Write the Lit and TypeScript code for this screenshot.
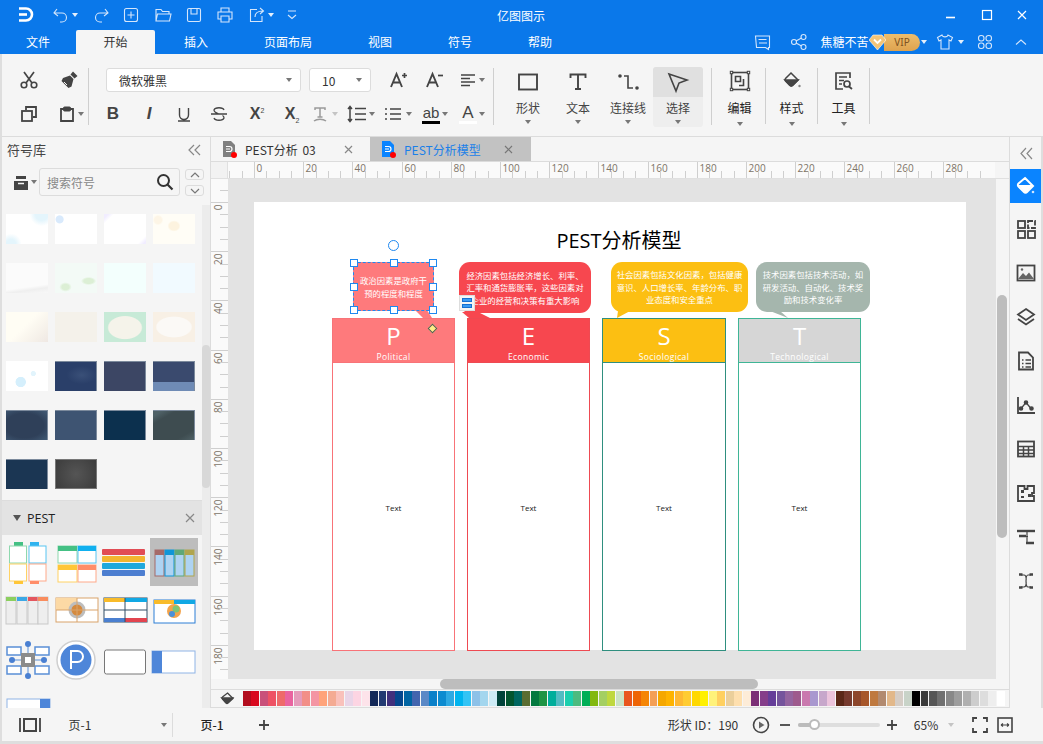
import { LitElement, html, css, svg, TemplateResult } from "lit";
import { customElement } from "lit/decorators.js";

const ic = (body: unknown, w = 20, h = 20, cls = "") =>
  html`<svg class="ic ${cls}" width=${w} height=${h} viewBox="0 0 ${w} ${h}">${body}</svg>`;
const caret = html`<i class="caret"></i>`;
type Item = [number, number, TemplateResult | string];
const row = (items: Item[], offset = 0) => {
  let end = offset;
  return items.map(([c, w, t]) => {
    const ml = c - w / 2 - end;
    end = c + w / 2;
    return html`<span class="cell" style="margin-left:${ml}px;width:${w}px">${t}</span>`;
  });
};

const logo = ic(svg`<path d="M3 3.500h7a6 6 0 0 1 0 12H3" fill="none" stroke-width="2.600"/><path d="M3 9.500h8" stroke-width="2.600"/>`, 20, 20);

const titleItems: Item[] = [
  [26, 20, logo],
  [61, 18, ic(svg`<path d="M5 3L2 7l4 3M2 7h8a4.500 4.500 0 0 1 0 9H8"/>`, 18, 18, "soft")],
  [75, 8, caret],
  [101, 18, ic(svg`<path d="M13 3l3 4-4 3M16 7H8a4.500 4.500 0 0 0 0 9h2"/>`, 18, 18, "soft")],
  [131, 16, ic(svg`<rect x="1.500" y="1.500" width="13" height="13" rx="2"/><path d="M8 4.500v7M4.500 8h7"/>`, 16, 16, "soft")],
  [163, 18, ic(svg`<path d="M2 15V3.500h5l1.500 2H15V8M2 15l1.500-7H17L15.500 15z"/>`, 18, 18, "soft")],
  [194, 16, ic(svg`<rect x="1.500" y="1.500" width="13" height="13" rx="1.500"/><path d="M5 2v5h6V2"/>`, 16, 16, "soft")],
  [225, 18, ic(svg`<path d="M5 6V2h8v4M5 13H2V6h14v7h-3M5 10h8v6H5z"/>`, 18, 18, "soft")],
  [257, 18, ic(svg`<path d="M14 10v5.500H2.500V3.500H9M7 11c0-4 3-6 8-6M12 2l3.500 3L12 8"/>`, 18, 18, "soft")],
  [271, 8, caret],
  [292, 14, ic(svg`<path d="M3 3h8M3 7l4 3.500L11 7"/>`, 14, 14, "soft")],
  [521, 60, html`<span class="apptitle">亿图图示</span>`],
  [951, 12, ic(svg`<path d="M1 8.500h9" stroke-width="1.600"/>`, 12, 12)],
  [987, 12, ic(svg`<rect x="1.500" y="1.500" width="9" height="9"/>`, 12, 12)],
  [1022, 12, ic(svg`<path d="M2 2l8 8M10 2l-8 8"/>`, 12, 12)],
];

const tabItems: Item[] = [
  [38, 40, "文件"],
  [115.5, 79, html`<span class="tab-on">开始</span>`],
  [196, 40, "插入"],
  [288, 70, "页面布局"],
  [380, 40, "视图"],
  [460, 40, "符号"],
  [540, 40, "帮助"],
  [763, 18, ic(svg`<path d="M1.500 3H15.500V14.500H14.500V16.500L11.500 14.500H2.500zM4.500 6.500h8M5 10h8"/>`, 18, 18, "soft")],
  [799, 18, ic(svg`<circle cx="4" cy="9" r="2.500"/><circle cx="13.500" cy="4" r="2.500"/><circle cx="13.500" cy="14" r="2.500"/><path d="M6 8l5.500-3M6 10l5.500 3"/>`, 18, 18, "soft")],
  [844.5, 48, html`<span class="uname">焦糖不苦</span>`],
  [894, 52, html`<span class="vip"><i class="vip-pill">VIP</i><svg class="vip-gem" width="17" height="17" viewBox="0 0 17 17"><path d="M4 1h9l4 5-8.500 10L0 6z" fill="#f3c477" stroke="#fff" stroke-width=".6"/><path d="M5 5.500l3.500 3.500L12 5.500" fill="none" stroke="#fff" stroke-width="1.800"/></svg></span>`],
  [924, 8, caret],
  [945, 18, ic(svg`<path d="M6 2L1.500 4.500l1.500 3.500 2-1V16h8V7l2 1 1.500-3.500L12 2c-.500 2.500-5.500 2.500-6 0z"/>`, 18, 18, "soft")],
  [961, 8, caret],
  [985, 16, ic(svg`<rect x="1.500" y="1.500" width="5.500" height="5.500" rx="2.500"/><rect x="9" y="1.500" width="5.500" height="5.500" rx="2.500"/><rect x="1.500" y="9" width="5.500" height="5.500" rx="2.500"/><rect x="9" y="9" width="5.500" height="5.500" rx="2.500"/>`, 16, 16, "soft")],
  [1021, 14, ic(svg`<path d="M2 9.500l5-4.500 5 4.500"/>`, 14, 14, "soft")],
];

const d = (b: unknown, s = 20) => ic(b, s, s, "dark");
const fontTop: Item[] = [
  [398, 20, d(svg`<path d="M3 17L8.500 4 14 17M5 12.500h7" stroke-width="1.900"/><path d="M14 5.500h5M16.500 3v5" stroke-width="1.700"/>`)],
  [434, 20, d(svg`<path d="M3 17L8.500 4 14 17M5 12.500h7" stroke-width="1.900"/><path d="M14 5.500h5" stroke-width="1.700"/>`)],
  [468, 16, d(svg`<path d="M1 3h14M1 6.500h9M1 10h14M1 13.500h9" stroke-width="1.500"/>`, 16)],
  [482, 8, caret],
];
const fontBottom: Item[] = [
  [113, 16, html`<b class="fmt fb">B</b>`],
  [149, 16, html`<b class="fmt fi">I</b>`],
  [184, 16, d(svg`<path d="M3.500 2v7a4.500 4.500 0 0 0 9 0V2M2 15h12" stroke-width="1.400"/>`, 16)],
  [219, 18, d(svg`<path d="M14 5c-1-3-9-3-10 0 0 2 2 3 5 4M4 13c1 3 9 3 10 0 0-1-.500-2-1.500-2.500M1 9h16" stroke-width="1.300"/>`, 18)],
  [257, 24, html`<span class="sup">X<sup>2</sup></span>`],
  [292, 24, html`<span class="sup">X<sub>2</sub></span>`],
  [320, 16, ic(svg`<path d="M3 4V2h10v2M8 2v9M5.500 11h5M2 15c3-2.500 9-2.500 12 0" stroke="#9a9a9a" stroke-width="1.500"/>`, 16, 16, "dim")],
  [335, 8, html`<i class="caret pale"></i>`],
  [357, 20, d(svg`<path d="M3 3v14M1 5l2-2.500L5 5M1 15l2 2.500L5 15M8 4.500h11M8 10h11M8 15.500h11" stroke-width="1.500"/>`)],
  [372, 8, caret],
  [393, 18, d(svg`<path d="M1 4h2M6 4h11M1 9h2M6 9h11M1 14h2M6 14h11" stroke-width="1.500"/>`, 18)],
  [409, 8, caret],
  [431, 20, html`<span class="ab">ab</span>`],
  [445, 8, caret],
  [468, 20, html`<span class="abig">A</span>`],
  [482, 8, caret],
];

const tools = [
  [ic(svg`<rect x="2" y="2.500" width="18" height="15" stroke-width="1.900"/>`, 22, 20, "tic"), "形状", false],
  [ic(svg`<path d="M2.500 6V2.500h15V6M10 2.500V17M7 17h6" stroke-width="1.900"/>`, 20, 20, "tic"), "文本", false],
  [ic(svg`<circle cx="2" cy="4" r="1.800" fill="#444" stroke="none"/><circle cx="19" cy="16" r="1.800" fill="#444" stroke="none"/><path d="M6 4h4v12h5"/>`, 20, 20, "tic"), "连接线", false],
  [ic(svg`<path d="M2 2l18 6-8 3-3 8z"/>`, 22, 20, "tic"), "选择", true],
] as [TemplateResult, string, boolean][];

const tools2 = [
  [ic(svg`<rect x="2.500" y="2.500" width="17" height="17"/><path d="M6.500 6.500h5v5h-5zM14.500 9v6.500H10"/>${[[2.5, 2.5], [19.5, 2.5], [2.5, 19.5], [19.5, 19.5]].map(([x, y]) => svg`<rect x=${x - 1.2} y=${y - 1.2} width="2.400" height="2.400" fill="#f5f5f5" stroke-width="1"/>`)}`, 22, 22, "tic"), "编辑"],
  [ic(svg`<path d="M10 2l7 7-5.500 5.500a2 2 0 0 1-2.500 0L4.500 10a2 2 0 0 1 0-2.500z" stroke-width="1.500"/><path d="M4 9h13l-5.500 5.500a2 2 0 0 1-2.500 0z" fill="#444"/><circle cx="18.500" cy="15" r="1.200" fill="#888" stroke="none"/>`, 22, 20, "tic"), "样式"],
  [ic(svg`<path d="M17 8V3H3v16h7M6 7h8M6 10.500h5M6 14h3" stroke-width="1.700"/><circle cx="14" cy="14" r="3" stroke-width="1.700"/><path d="M16 16.500l3 2.500" stroke-width="1.800"/>`, 22, 22, "tic"), "工具"],
] as [TemplateResult, string][];

const thumbs: [string, string][] = [
  ["radial-gradient(circle at 85% 0,#e4f5fc 0 14%,transparent 26%),radial-gradient(circle at 12% 100%,#e4f5fc 0 10%,transparent 22%),#fff", ""],
  ["radial-gradient(circle at 11% 18%,#d9eafc 0 8%,transparent 10%),#fff", ""],
  ["linear-gradient(135deg,#f1edff 0 6%,#fff 14%,#fff 88%,#f1edff 96%)", ""],
  ["radial-gradient(ellipse at 50% 40%,#fdf3df 0 16%,transparent 22%),radial-gradient(circle at 12% 20%,#fdf5e6 0 8%,transparent 12%),#fffdf6", ""],
  ["linear-gradient(172deg,#fbfbfb 0 75%,#efefef 85%,#f8f8f8)", ""],
  ["radial-gradient(ellipse at 25% 80%,#dcefd5 0 8%,transparent 14%),radial-gradient(ellipse at 80% 60%,#dcefd5 0 10%,transparent 16%),#f3faf6", ""],
  ["#f3fffd", ""],
  ["#f1faff", ""],
  ["linear-gradient(135deg,#fffdf4 0 45%,#efe8e3)", ""],
  ["#f4f1ea", ""],
  ["radial-gradient(ellipse 42% 40% at 50% 52%,#f5f3ea 0 92%,transparent 100%),#c7ead7", ""],
  ["radial-gradient(ellipse 44% 36% at 50% 50%,#fbf9f6 0 92%,transparent 100%),#f8f0e5", ""],
  ["radial-gradient(circle at 35% 70%,#d5effc 0 14%,transparent 16%),radial-gradient(circle at 65% 42%,#e2f4fc 0 7%,transparent 9%),#fff", ""],
  ["radial-gradient(ellipse at 65% 45%,#3a5078,transparent 40%),#2a3f69", "dk"],
  ["#3c4664", "dk"],
  ["linear-gradient(#3a4a6e 0 68%,#6f8bb5 68% 100%)", "dk"],
  ["radial-gradient(ellipse at 45% 50%,#2f4059 0 60%,#415a75 100%)", "dk"],
  ["#3e5472", "dk"],
  ["#0c304e", "dk"],
  ["linear-gradient(150deg,#4f6166 0 10%,#3e4c50 25%,#3e4c50 80%,#4f6166)", "dk"],
  ["#1b3653", "dk"],
  ["radial-gradient(circle at 50% 50%,#555,#3c3c3c)", "gr"],
];

const R = (x: number, y: number, w: number, h: number, f: string, s = "none", sw = 1, rx = 0) =>
  svg`<rect x=${x} y=${y} width=${w} height=${h} fill=${f} stroke=${s} stroke-width=${sw} rx=${rx}/>`;

const pestThumbs: unknown[] = [
  svg`${R(11, 4, 9, 4, "#44c084")}${R(27, 4, 9, 4, "#2fb3ef")}${R(6.5, 8, 17, 17, "#fff", "#8ed8ae")}${R(26, 8, 17, 17, "#fff", "#58c5f2")}${R(6.5, 26, 17, 17, "#fff", "#ffd264")}${R(26, 26, 17, 17, "#fff", "#ffa98a")}${R(11, 43, 9, 3, "#ffc637")}${R(27, 43, 9, 3, "#ff8d69")}`,
  svg`${R(6, 8, 19, 17, "#fff", "#8ed8ae")}${R(6, 8, 19, 5, "#44c084")}${R(26, 8, 18, 17, "#fff", "#58c5f2")}${R(26, 8, 18, 5, "#11b0ef")}${R(6, 27, 19, 17, "#fff", "#ffd264")}${R(6, 27, 19, 5, "#ffc637")}${R(26, 27, 18, 17, "#fff", "#ffa98a")}${R(26, 27, 18, 5, "#ff8d69")}`,
  svg`${R(1, 11, 43, 6, "#e14c55", "none", 1, 1)}${R(1, 18, 43, 6, "#f3b530", "none", 1, 1)}${R(1, 25, 43, 6, "#1fa8dc", "none", 1, 1)}${R(1, 32, 43, 6, "#4d7ed0", "none", 1, 1)}`,
  svg`${R(5, 12, 9, 26, "#aed3f2", "#a56a68")}${R(5, 12, 9, 5, "#a56a68")}${R(15, 12, 9, 26, "#aed3f2", "#0f96d8")}${R(15, 12, 9, 5, "#0f96d8")}${R(25, 12, 9, 26, "#aed3f2", "#5fa878")}${R(25, 12, 9, 5, "#5fa878")}${R(35, 12, 9, 26, "#aed3f2", "#b0a54e")}${R(35, 12, 9, 5, "#b0a54e")}`,
  svg`${[["#8ccf5f", 3], ["#3ba8e6", 14], ["#e4575f", 25], ["#f98d5e", 35]].map(([c, x]) => svg`${R(x as number, 10, 10, 27, "#eee", "#c9c9c9")}${R(x as number, 10, 10, 4, c as string)}`)}`,
  svg`${R(4, 11, 42, 24, "#fff", "#d9a36a")}${R(4, 11, 21, 12, "#fcd9a5")}<circle cx="25" cy="23" r="8.500" fill="#bdbdbd"/><circle cx="25" cy="23" r="5.500" fill="#d58a3e"/><path d="M4 23h42M25 11v24" stroke="#d9a36a" fill="none"/>`,
  svg`${R(3, 11, 43, 24, "#fff", "#334f66")}${R(3, 11, 21, 4, "#f8bb2a")}${R(24, 11, 22, 4, "#11a8e4")}${R(3, 31, 21, 4, "#4a7fd0")}${R(24, 31, 22, 4, "#e2444f")}<path d="M3 23h43M24 11v24" stroke="#334f66" fill="none"/>`,
  svg`${R(4, 13, 41, 23, "#fff", "#2d7fd6")}${R(4, 13, 20, 4, "#f8bb2a")}${R(24, 13, 21, 4, "#11a8e4")}<circle cx="24" cy="24" r="7" fill="#f3a34a"/><circle cx="26" cy="22" r="3.500" fill="#7cc576"/><circle cx="22" cy="27" r="3" fill="#4a90d9"/>`,
  svg`${R(4, 11, 14, 8, "#fff", "#5a8fd6", 1.5)}${R(32, 11, 14, 8, "#fff", "#5a8fd6", 1.5)}${R(4, 30, 14, 8, "#fff", "#5a8fd6", 1.5)}${R(32, 30, 14, 8, "#fff", "#5a8fd6", 1.5)}<path d="M25 8v32M9 24h32" stroke="#5a8fd6" fill="none"/>${R(18, 17, 14, 14, "#8b8b8b")}${R(22, 21, 6, 6, "#fff")}${[[25, 8], [9, 24], [41, 24], [25, 40]].map(([x, y]) => svg`<circle cx=${x} cy=${y} r="3" fill="#4a80d2"/>`)}`,
  svg`<circle cx="24" cy="24" r="19" fill="#fff" stroke="#cfcfcf" stroke-width="1.500"/><circle cx="24" cy="24" r="15.500" fill="#4e86d9"/><path d="M19 33V15h6.500a5.500 5.500 0 0 1 0 11H19" fill="none" stroke="#fff" stroke-width="2"/>`,
  svg`${R(3.5, 14, 41, 24, "#fff", "#777", 1, 2)}`,
  svg`${R(2, 15, 43, 22, "#fff", "#8fb4e6")}${R(2, 15, 10, 22, "#4e86d9")}`,
  svg`${R(4, 14, 43, 16, "#fff", "#8fb4e6")}${R(37, 14, 10, 16, "#4e86d9")}`,
];

const sideIcons = [
  svg`<rect x="2" y="2" width="7" height="7" stroke-width="1.800"/><rect x="12" y="2" width="7" height="7" stroke-width="1.800" stroke-dasharray="5 1.500"/><rect x="2" y="12" width="7" height="7" stroke-width="1.800"/><rect x="12" y="12" width="7" height="7" stroke-width="1.800"/>`,
  svg`<rect x="1.500" y="2.500" width="17" height="15" stroke-width="1.800"/><path d="M2 16l5-6 3 3 3-3.500 5 6.500z" fill="#666" stroke="none"/><circle cx="6" cy="6.500" r="1.200" fill="#666" stroke="none"/>`,
  svg`<path d="M10 2l8 5.500-8 5.500-8-5.500z" stroke-width="1.800"/><path d="M2 12l8 5.500 8-5.500" stroke-width="1.800"/>`,
  svg`<path d="M3 1.500h9l5 5v12H3z" stroke-width="1.800"/><path d="M6 9h1.500M9.500 9H15M6 12.500h1.500M9.500 12.500H15M6 16h1.500M9.500 16H15" stroke-width="1.300"/>`,
  svg`<path d="M2 2v16h17" stroke-width="1.800"/><path d="M5 13.500l5-6 5 6" stroke-width="1.300"/><circle cx="5" cy="13.500" r="1.500" fill="#444"/><circle cx="10" cy="7.500" r="1.500" fill="#444"/><circle cx="15.500" cy="13.500" r="1.500" fill="#444"/>`,
  svg`<rect x="2" y="2.500" width="16" height="15" stroke-width="1.800"/><path d="M2 7.500h16M2 11h16M2 14.500h16M7.500 7.500v10M12.500 7.500v10" stroke-width="1.500"/>`,
  svg`<path d="M2 3h6.500v3h3V3H18v7h-2v3h2v5H2z" stroke-width="1.800"/><path d="M5 7h3v3H5zM12 11h3v3h-3zM5 13h3v2H5z" fill="#444" stroke="none"/>`,
  svg`<path d="M1 4h18" stroke-width="2.400"/><path d="M11 4v13M4 9.500h8" stroke-width="1.200"/><path d="M3 9h7M10 16h8" stroke-width="2.400"/>`,
  svg`<path d="M5 4h3c3 0 2 6 2 6s1 6-2 6H5M15 4h-3c-2 0-2 6-2 6s0 6 2 6h3" stroke-width="1.200"/><path d="M3 3.500h3.500M3 16.500h3.500M13.500 3.500H17M13.500 16.500H17" stroke-width="2.600"/>`,
];

const palette = `#b20d1e #d9091f #c9507a #ee5264 #ee6a6a #e963a0 #e59bbb #f28f88 #f495a3 #ffa37a #f4ab93 #f9c1bb #e9d5e8 #fdd5e3 #fde3ea #132858 #233a72 #41307c #05478d #0065a3 #4365ae #5a88c6 #0a80c9 #0c8bd0 #2ea9e2 #00b4ef #33c4f5 #8dc1e8 #a3d6ee #cdebf5 #00433a #03552f #006660 #5a6d32 #04793f #1e9444 #00ae9b #52bcc2 #1bcfae #4cbb7f #00ae56 #82b80f #a4cf62 #bfd83f #cbe3c4 #e9561d #ee6506 #f58505 #f49f55 #f5a700 #feb300 #feb833 #ffcc33 #ffd800 #fff000 #fff27a #ffd060 #ebcf9b #fedfae #fdecd8 #7b2f76 #853d8a #653d99 #75549c #94649f #9e5a8d #ca79ae #a998cf #c7a7cb #ecc4dc #5b2818 #763a2e #8d462b #a7562a #bf793f #b28a6f #e2b88a #d5cdc6 #c8d3c8 #000000 #3a3a3a #565656 #707070 #888888 #9d9d9d #b0b0b0 #cdcdcd #dddddd #eeeeee #ffffff`.split(" ");

const STEP = 49.2;
const hRuler = () => {
  const out: unknown[] = [];
  for (let i = -2; i < 60; i++) {
    const x = Math.round(26 + (i * STEP) / 4) + 0.5;
    const major = i % 4 === 0;
    out.push(svg`<path d="M${x} ${major ? 0 : 9}V17" stroke="#cfcfcf"/>`);
    if (major && i >= 0) out.push(svg`<text x=${x + 2} y="10" class="rl">${i * 5}</text>`);
  }
  return out;
};
const vRuler = () => {
  const out: unknown[] = [];
  for (let i = -1; i < 39; i++) {
    const y = Math.round(23 + (i * STEP) / 4) + 0.5;
    const major = i % 4 === 0;
    out.push(svg`<path d="M${major ? 0 : 9} ${y}H17" stroke="#cfcfcf"/>`);
    if (major && i >= 0) out.push(svg`<text transform="translate(11 ${y + 2}) rotate(-90)" text-anchor="end" class="rl">${i * 5}</text>`);
  }
  return out;
};

const cols = [
  { k: "p", l: "P", s: "Political" },
  { k: "e", l: "E", s: "Economic" },
  { k: "s", l: "S", s: "Sociological" },
  { k: "t", l: "T", s: "Technological" },
];
const handles = [0, 50, 100].flatMap((y) => [0, 50, 100].filter((x) => !(x === 50 && y === 50)).map((x) => [x, y]));

const docIcon = (c: string) => html`<svg class="docic" width="14" height="18" viewBox="0 0 14 18"><path d="M1 1h8l4 4v12H1z" fill=${c}/><path d="M4 6.500h3.500a2.500 2.500 0 0 1 0 5H4M4 9h4" fill="none" stroke="#fff" stroke-width="1.200"/><circle cx="12" cy="15" r="3" fill="#f00"/></svg>`;

@customElement("app-root")
export class AppRoot extends LitElement {
  static styles = css`
    :host { display: block; width: 1043px; height: 744px; background: #dedede; overflow: hidden; color: #333;
      font-family: "Noto Sans CJK SC", "Noto Sans", sans-serif; font-size: 12px; }
    * { box-sizing: border-box; }
    .app { display: flex; flex-direction: column; height: 741px; }
    .cell { display: inline-flex; align-items: center; justify-content: center; flex: none; height: 100%; }
    .ic { display: block; fill: none; stroke: #fff; stroke-width: 1.200; overflow: visible; flex: none; }
    .ic.soft { stroke: #d5e6fb; stroke-width: 1.100; }
    .ic.dark, .ic.tic { stroke: #444; stroke-width: 1.600; }
    .ic.dim { stroke: #9a9a9a; }
    .caret { display: block; width: 0; height: 0; border: 3.500px solid transparent; border-top: 4px solid #777; border-bottom: 0; }
    .caret.pale { border-top-color: #c4c4c4; }
    .bar-title .caret, .bar-tabs .caret { border-top-color: #e4effc; }
    .bar-title { display: flex; height: 30px; background: #0a78ea; color: #fff; flex: none; }
    .apptitle { font-size: 12px; white-space: nowrap; }
    .bar-tabs { display: flex; height: 24px; background: #0a78ea; color: #fff; flex: none; font-size: 12px; line-height: 24px; }
    .tab-on { display: block; width: 79px; height: 24px; background: #f5f5f5; color: #333; text-align: center; border-radius: 2px 2px 0 0; }
    .uname { white-space: nowrap; font-size: 12px; }
    .vip { position: relative; display: block; width: 52px; height: 17px; }
    .vip-pill { position: absolute; left: 16px; top: 0; width: 36px; height: 17px; border-radius: 0 9px 9px 0; background: linear-gradient(#edbd6c, #dea34f); color: #7d5120; font-style: normal; font-size: 10px; line-height: 17px; text-align: center; font-family: "Noto Sans", sans-serif; }
    .vip-gem { position: absolute; left: 1px; top: 0; }

    .ribbon { display: flex; height: 83px; flex: none; background: #f5f5f5; border-bottom: 1px solid #dcdcdc; margin-left: 2px; }
    .clip { width: 86px; flex: none; padding-top: 12px; }
    .rrow { display: flex; height: 28px; }
    .rrow.two { margin-top: 6px; }
    .vsep { width: 1px; height: 57px; margin-top: 14px; background: #cfcfcf; flex: none; }
    .font { width: 404px; flex: none; padding-top: 12px; }
    .fontsel { display: flex; align-items: center; justify-content: space-between; height: 24px; width: 100%; background: #fff; border: 1px solid #dcdcdc; border-radius: 3px; padding: 0 8px 0 12px; font-size: 12px; }
    .fb { font: 700 17px "Liberation Sans", sans-serif; color: #444; }
    .fi { font: italic 700 17px "Liberation Sans", sans-serif; color: #444; }
    .fmt { display: block; }
    .sup { font: 700 16px "Liberation Sans", sans-serif; color: #444; white-space: nowrap; }
    .sup sup, .sup sub { font-size: 7px; font-weight: 400; line-height: 0; }
    .ab { display: block; width: 18px; text-align: center; font: 400 15px/15px "Liberation Sans", sans-serif; color: #444; border-bottom: 3px solid #000; padding-bottom: 1px; }
    .abig { display: block; width: 18px; text-align: center; font: 400 17px/16px "Liberation Sans", sans-serif; color: #444; border-bottom: 3px solid #fff; }
    .tools { display: flex; width: 200px; margin: 0 8px 0 9px; padding-top: 13px; flex: none; }
    .tool { width: 50px; height: 60px; display: flex; flex-direction: column; align-items: center; flex: none; font-size: 12px; color: #444; }
    .tool .top { height: 30px; width: 100%; display: flex; align-items: center; justify-content: center; }
    .tool.on { background: #eeeeee; border-radius: 3px; }
    .tool.on .top { background: #e0e0e0; border-radius: 3px 3px 0 0; }
    .tool .lbl { height: 20px; line-height: 22px; }
    .tool .caret { margin-top: 3px; }
    .tools2 { display: flex; flex: none; margin-left: 2px; padding-top: 12px; }
    .tools2 .tool { width: 51px; height: 60px; color: #222; }
    .tools2 .tool .lbl { height: 22px; line-height: 26px; }
    .tools2 .tool .caret { margin-top: 5px; }
    .tools2 .vsep { margin-top: 2px; height: 56px; }

    .main { display: flex; flex: 1; min-height: 0; margin-left: 2px; }
    .left { width: 209px; flex: none; background: #f5f5f5; border-right: 1px solid #dcdcdc; display: flex; flex-direction: column; }
    .lhead { height: 30px; display: flex; align-items: center; justify-content: space-between; padding: 0 8px 5px 5px; font-size: 13px; color: #444; flex: none; }
    .srow { height: 38px; display: flex; flex: none; }
    .drawer { width: 37px; display: flex; align-items: flex-start; padding: 7px 0 0 10px; gap: 1px; }
    .drawer .caret { margin-top: 6px; }
    .sbox { width: 141px; height: 28px; margin-top: 1px; border: 1px solid #dcdcdc; border-radius: 3px; display: flex; align-items: center; justify-content: space-between; padding: 0 5px 0 7px; color: #888; font-size: 12px; }
    .updown { margin: 2px 0 0 5px; width: 19px; }
    .updown span { display: flex; align-items: center; justify-content: center; width: 19px; height: 11px; border: 1px solid #dcdcdc; border-radius: 3px; margin-bottom: 5px; }
    .lbody { display: flex; flex: 1; min-height: 0; }
    .lists { width: 200px; flex: none; display: flex; flex-direction: column; min-height: 0; }
    .lscroll { width: 8px; flex: none; background: #ececec; display: flex; flex-direction: column; }
    .lscroll i { display: block; width: 8px; height: 143px; margin-top: 140px; background: #d8d8d8; border-radius: 4px; }
    .gal { height: 295px; flex: none; display: grid; grid-template-columns: repeat(4, 42px); grid-auto-rows: 30px; gap: 19px 7px; padding: 9px 0 0 4px; align-content: start; }
    .gal i { display: block; }
    .gal i.dk { border: 1px solid #7c8a9c; border-width: 1px 1px 0 0; }
    .gal i.gr { border: 1px solid #777; }
    .phead { height: 35px; flex: none; background: #e3e3e3; border-top: 1px solid #ddd; display: flex; align-items: center; padding: 0 7px 0 11px; font: 12.500px "Open Sans", sans-serif; color: #222; gap: 6px; }
    .phead .tri { width: 0; height: 0; border: 4.500px solid transparent; border-top: 6px solid #555; border-bottom: 0; }
    .phead .x { margin-left: auto; }
    .pgrid { flex: 1; min-height: 0; overflow: hidden; display: grid; grid-template-columns: repeat(4, 48px); grid-auto-rows: 48px; gap: 1px; padding: 3px 0 0 1px; align-content: start; }
    .pgrid .sel { background: #bdbdbd; }
    .pgrid svg { display: block; }

    .center { width: 798px; flex: none; display: flex; flex-direction: column; min-height: 0; }
    .dtabs { display: flex; height: 25px; flex: none; background: #f5f5f5; border-bottom: 1px solid #dcdcdc; }
    .dtab { width: 159px; display: flex; align-items: center; padding: 0 17px 0 11px; gap: 9px; font-size: 12px; color: #333; word-spacing: 2px; }
    .dtab.on { width: 161px; background: #c2c2c2; color: #1a7fe8; padding-right: 18px; }
    .dtab .name { flex: 1; white-space: nowrap; }
    .docic { overflow: visible; flex: none; }
    .rrow2 { display: flex; height: 17px; flex: none; background: #f5f5f5; border-bottom: 1px solid #e0e0e0; }
    .corner { width: 17px; background: #f2f2f2; flex: none; border-right: 1px solid #e0e0e0; }
    .hr { background: #fafafa; flex: none; }
    .rsvg { display: block; overflow: hidden; }
    .rl { font: 10px "Open Sans", sans-serif; fill: #7d7468; stroke: none; }
    .work { display: flex; flex: 1; min-height: 0; }
    .vr { width: 17px; flex: none; background: #fafafa; }
    .canvas { position: relative; flex: 1; background: #e3e3e3; overflow: hidden; }
    .vs { width: 13px; flex: none; background: #f5f5f5; padding: 116px 2px 0 1px; }
    .vs i { display: block; height: 243px; border-radius: 5px; background: #bdbdbd; }
    .hs { height: 11px; flex: none; background: #f5f5f5; padding-left: 229px; border-bottom: 1px solid #dcdcdc; }
    .hs i { display: block; width: 318px; height: 10px; border-radius: 5px; background: #bdbdbd; }
    .pal { height: 18px; flex: none; background: #f5f5f5; display: flex; align-items: center; padding-left: 9px; border-bottom: 1px solid #dcdcdc; }
    .pal .bk { width: 23px; flex: none; }
    .pal i { width: 7.970px; height: 15px; margin-right: .5px; flex: none; display: block; }

    .page { position: absolute; left: 26px; top: 23px; width: 712px; height: 448px; background: #fff; }
    .ptitle { position: absolute; left: 0; width: 730px; top: 25px; text-align: center; font-size: 20px; line-height: 28px; color: #000; font-family: "Open Sans", "Noto Sans CJK SC", sans-serif; }
    .col { position: absolute; top: 116px; height: 333px; width: 123px; border: 1px solid; display: flex; flex-direction: column; }
    .col.p { left: 78px; border-color: #f87378; } .col.e { left: 213px; border-color: #ee4a52; }
    .col.s { left: 348px; width: 124px; border-color: #2f8f7f; } .col.t { left: 484px; border-color: #3fb596; }
    .hd { height: 44px; flex: none; color: #fff; text-align: center; border-bottom: 1px solid; border-color: inherit; font-family: "Open Sans", sans-serif; }
    .p .hd { background: #fe7a7c; } .e .hd { background: #f7474f; } .s .hd { background: #fcbf12; } .t .hd { background: #d6d6d6; }
    .hd b { display: block; font-weight: 400; font-size: 24px; line-height: 34px; }
    .hd span { display: block; font-size: 8.500px; line-height: 10px; letter-spacing: .35px; margin-top: -1px; }
    .bd { flex: 1; display: flex; align-items: center; justify-content: center; font: 8px "Open Sans", sans-serif; color: #222; padding-top: 1px; }
    .bub { position: absolute; top: 60px; display: flex; align-items: center; justify-content: center; text-align: center; color: #fff; font-size: 8.400px; line-height: 12.500px; border-radius: 11px; white-space: nowrap; }
    .bub.p { left: 99px; width: 81px; height: 49px; background: #fe7a7c; border-radius: 0; }
    .bub.e { left: 205px; width: 132px; height: 51px; background: #f7474f; }
    .bub.s { left: 357px; width: 137px; height: 50px; background: #fcbf12; }
    .bub.t { left: 502px; width: 114px; height: 50px; background: #a5b6ad; }
    .tails { position: absolute; left: 0; top: 0; }
    .selbox { position: absolute; left: 99px; top: 60px; width: 81px; height: 49px; border: 1px dashed #1e88f0; }
    .h { position: absolute; width: 8px; height: 8px; margin: -4px 0 0 -4px; background: #fff; border: 1px solid #1e88f0; }
    .rot { position: absolute; left: 50%; top: -23px; width: 11px; height: 11px; margin-left: -5.500px; border: 1px solid #1e88f0; border-radius: 50%; background: #fff; }
    .float { position: absolute; left: 205px; top: 93px; width: 16px; height: 16px; background: #f4f4f4; border: 1px solid #ddd; display: flex; flex-direction: column; justify-content: center; gap: 2px; padding: 0 2px; }
    .float i { display: block; height: 4px; background: #3a9bf4; border: 1px solid #1670d0; }
    .dia { position: absolute; left: 175px; top: 123px; width: 7px; height: 7px; background: #ffee88; border: 1px solid #555; transform: rotate(45deg); }

    .right { width: 32px; flex: none; background: #f5f5f5; border-left: 1px solid #dcdcdc; display: flex; flex-direction: column; align-items: center; }
    .rcol { height: 32px; display: flex; align-items: center; justify-content: center; }
    .ract { height: 34px; width: 100%; background: #0a84ff; display: flex; align-items: center; justify-content: center; margin-bottom: 4px; }
    .rico { height: 44px; display: flex; align-items: center; justify-content: center; }

    .status { height: 33px; flex: none; background: #f5f5f5; display: flex; margin-left: 2px; margin-top: 0; font-size: 12px; color: #333; }
    .status .bold { font-weight: 500; color: #222; white-space: nowrap; }
    .status .txt { white-space: nowrap; }
    .slider { position: relative; display: block; width: 82px; height: 4px; border-radius: 2px; background: #dedede; }
    .slider::before { content: ""; position: absolute; left: 0; top: 0; width: 16px; height: 4px; background: #bbb; border-radius: 2px; }
    .slider i { position: absolute; left: 11px; top: -4px; width: 11px; height: 11px; border-radius: 50%; background: #fff; border: 2px solid #bbb; }
    .stsep { display: block; width: 1px; height: 24px; background: #dcdcdc; }
  `;

  render() {
    const statusItems: Item[] = [
      [30, 24, d(svg`<path d="M2 5v14M22 5v14" stroke-width="1.800"/><rect x="6" y="6" width="12" height="12" stroke-width="2"/>`, 24)],
      [80, 30, html`<span class="txt">页-1</span>`],
      [164, 8, caret],
      [172, 1, html`<i class="stsep"></i>`],
      [212, 30, html`<span class="bold">页-1</span>`],
      [264, 12, d(svg`<path d="M6 1v10M1 6h10" stroke-width="1.800"/>`, 12)],
      [703, 80, html`<span class="txt">形状 ID：190</span>`],
      [761, 18, d(svg`<circle cx="9" cy="9" r="7.500" stroke-width="1.600"/><path d="M7 5.500L12.500 9 7 12.500z" fill="#666" stroke="none"/>`, 18)],
      [785, 12, d(svg`<path d="M1 6h10" stroke-width="1.800"/>`, 12)],
      [839, 82, html`<span class="slider"><i></i></span>`],
      [892, 12, d(svg`<path d="M6 1v10M1 6h10" stroke-width="1.800"/>`, 12)],
      [926, 30, html`<span class="txt">65%</span>`],
      [951, 8, html`<i class="caret pale"></i>`],
      [980, 16, d(svg`<path d="M1 5V1h4M11 1h4v4M15 11v4h-4M5 15H1v-4" stroke-width="1.800"/>`, 16)],
      [1005, 16, d(svg`<rect x="1" y="1" width="14" height="14" stroke-width="1.600"/><path d="M4 8h8M4 8l2-1.500M4 8l2 1.500M12 8l-2-1.500M12 8l-2 1.500" stroke-width="1.100"/>`, 16)],
    ];
    return html`<div class="app">
      <div class="bar-title">${row(titleItems)}</div>
      <div class="bar-tabs">${row(tabItems)}</div>

      <div class="ribbon">
        <div class="clip">
          <div class="rrow">${row([
            [29, 20, d(svg`<circle cx="5" cy="15" r="2.800"/><circle cx="15" cy="15" r="2.800"/><path d="M7 13L15 2M13 13L5 2" stroke-width="1.700"/>`)],
            [69, 20, d(svg`<path d="M14 1.500l4.500 4.500-3 2.500-4-4zM11 5.500l3.500 3.500-2 7.500-3 1.500-7-7 1.500-3z" fill="#444" stroke="none"/><path d="M5 12l3 3" stroke="#f5f5f5" stroke-width="1"/>`)],
          ] as Item[], 2)}</div>
          <div class="rrow two">${row([
            [29, 18, d(svg`<rect x="2" y="6" width="10" height="10" stroke-width="1.800"/><path d="M6 5V2h10v10h-3" stroke-width="1.800"/>`, 18)],
            [67, 18, d(svg`<path d="M5 4H3v12h12V4h-2" stroke-width="1.800"/><rect x="5.500" y="2" width="7" height="4" rx="1" fill="#444" stroke-width="1"/>`, 18)],
            [81, 8, caret],
          ] as Item[], 2)}</div>
        </div>
        <div class="vsep"></div>
        <div class="font">
          <div class="rrow">${row([
            [203.5, 195, html`<span class="fontsel"><span>微软雅黑</span>${caret}</span>`],
            [340, 62, html`<span class="fontsel"><span>10</span>${caret}</span>`],
            ...fontTop,
          ] as Item[], 89)}</div>
          <div class="rrow two">${row(fontBottom, 89)}</div>
        </div>
        <div class="vsep"></div>
        <div class="tools">
          ${tools.map(([i, t, on]) => html`<div class="tool ${on ? "on" : ""}"><div class="top">${i}</div><div class="lbl">${t}</div>${caret}</div>`)}
        </div>
        <div class="vsep"></div>
        <div class="tools2">
          ${tools2.map(([i, t]) => html`<div class="tool"><div class="top">${i}</div><div class="lbl">${t}</div>${caret}</div><div class="vsep"></div>`)}
        </div>
      </div>

      <div class="main">
        <div class="left">
          <div class="lhead"><span>符号库</span>${ic(svg`<path d="M7 2L2 7l5 5M13 2L8 7l5 5" stroke="#888"/>`, 15, 14)}</div>
          <div class="srow">
            <div class="drawer">
              ${d(svg`<path d="M4 2h10v3H4z" fill="#444" stroke="none"/><path d="M2 7h14v9H2z" fill="#444" stroke="none"/><path d="M6 9.500h6" stroke="#f5f5f5" stroke-width="1.500"/>`, 18)}
              ${caret}
            </div>
            <div class="sbox"><span>搜索符号</span>${ic(svg`<circle cx="7.500" cy="7.500" r="5.500" stroke="#333" stroke-width="2"/><path d="M11.500 11.500l5 5" stroke="#333" stroke-width="2.200"/>`, 18, 18)}</div>
            <div class="updown">
              <span>${ic(svg`<path d="M1 6l4-4 4 4" stroke="#777"/>`, 10, 8)}</span>
              <span>${ic(svg`<path d="M1 2l4 4 4-4" stroke="#777"/>`, 10, 8)}</span>
            </div>
          </div>
          <div class="lbody">
            <div class="lists">
              <div class="gal">${thumbs.map(([b, c]) => html`<i class=${c} style="background:${b}"></i>`)}</div>
              <div class="phead"><i class="tri"></i><span>PEST</span><span class="x">${ic(svg`<path d="M1 1l8 8M9 1L1 9" stroke="#888"/>`, 10, 10)}</span></div>
              <div class="pgrid">
                ${pestThumbs.map((t, i) => html`<div class=${i === 3 ? "sel" : ""}><svg width="48" height="48" viewBox="0 0 48 48">${t}</svg></div>`)}
              </div>
            </div>
            <div class="lscroll"><i></i></div>
          </div>
        </div>

        <div class="center">
          <div class="dtabs">
            <div class="dtab">${docIcon("#808080")}<span class="name">PEST分析 03</span>${ic(svg`<path d="M1 1l7 7M8 1L1 8" stroke="#888"/>`, 9, 9)}</div>
            <div class="dtab on">${docIcon("#0a84ff")}<span class="name">PEST分析模型</span>${ic(svg`<path d="M1 1l7 7M8 1L1 8" stroke="#777"/>`, 9, 9)}</div>
          </div>
          <div class="rrow2"><div class="corner"></div><div class="hr"><svg class="rsvg" width="767" height="16">${hRuler()}</svg></div></div>
          <div class="work">
            <div class="vr"><svg class="rsvg" width="17" height="501">${vRuler()}</svg></div>
            <div class="canvas">
              <div class="page">
                <div class="ptitle">PEST分析模型</div>
                ${cols.map((c) => html`<div class="col ${c.k}"><div class="hd"><b>${c.l}</b><span>${c.s}</span></div><div class="bd">Text</div></div>`)}
                <svg class="tails" width="712" height="448">
                  <polygon points="161,108 173,108 178,116 169,116" fill="#fe7a7c"/>
                  <polygon points="208,110 224,110 236,116 215,116" fill="#f7474f"/>
                  <polygon points="364,109 376,109 363,116" fill="#fcbf12"/>
                  <polygon points="516,109 526,109 534,116" fill="#a5b6ad"/>
                </svg>
                <div class="bub p"><span>政治因素是政府干<br />预的程度和程度</span></div>
                <div class="bub e"><span>经济因素包括经济增长、利率、<br />汇率和通货膨胀率，这些因素对<br />企业的经营和决策有重大影响</span></div>
                <div class="bub s"><span>社会因素包括文化因素，包括健康<br />意识、人口增长率、年龄分布、职<br />业态度和安全重点</span></div>
                <div class="bub t"><span>技术因素包括技术活动，如<br />研发活动、自动化、技术奖<br />励和技术变化率</span></div>
                <div class="selbox">
                  <i class="rot"></i>
                  ${handles.map(([x, y]) => html`<i class="h" style="left:${x}%;top:${y}%"></i>`)}
                </div>
                <div class="float"><i></i><i></i></div>
                <i class="dia"></i>
              </div>
            </div>
            <div class="vs"><i></i></div>
          </div>
          <div class="hs"><i></i></div>
          <div class="pal">
            <span class="bk">${d(svg`<path d="M7.500 2l5.500 5.500-5 4.500a1.500 1.500 0 0 1-2 0L2.500 8a1.500 1.500 0 0 1 0-2z" stroke-width="1.300"/><path d="M2 7h10.500l-4.500 4.500a1.500 1.500 0 0 1-2 0z" fill="#444"/>`, 15)}</span>
            ${palette.map((c) => html`<i style="background:${c}"></i>`)}
          </div>
        </div>

        <div class="right">
          <div class="rcol">${ic(svg`<path d="M8 2L3 7.500 8 13M14 2L9 7.500l5 5.500" stroke="#888"/>`, 16, 15)}</div>
          <div class="ract">${ic(svg`<path d="M10 2l8 8-6 6a2 2 0 0 1-3 0L3.500 10.500a2 2 0 0 1 0-3z" fill="none" stroke="#fff" stroke-width="2"/><path d="M3 9h15l-6 6.500a2 2 0 0 1-3 0z" fill="#fff" stroke="none"/><circle cx="18" cy="16" r="1.300" fill="#cfe6ff" stroke="none"/>`, 21, 20)}</div>
          ${sideIcons.map((b) => html`<div class="rico">${ic(b, 20, 20, "dark")}</div>`)}
        </div>
      </div>

      <div class="status">${row(statusItems, 2)}</div>
    </div>`;
  }
}
